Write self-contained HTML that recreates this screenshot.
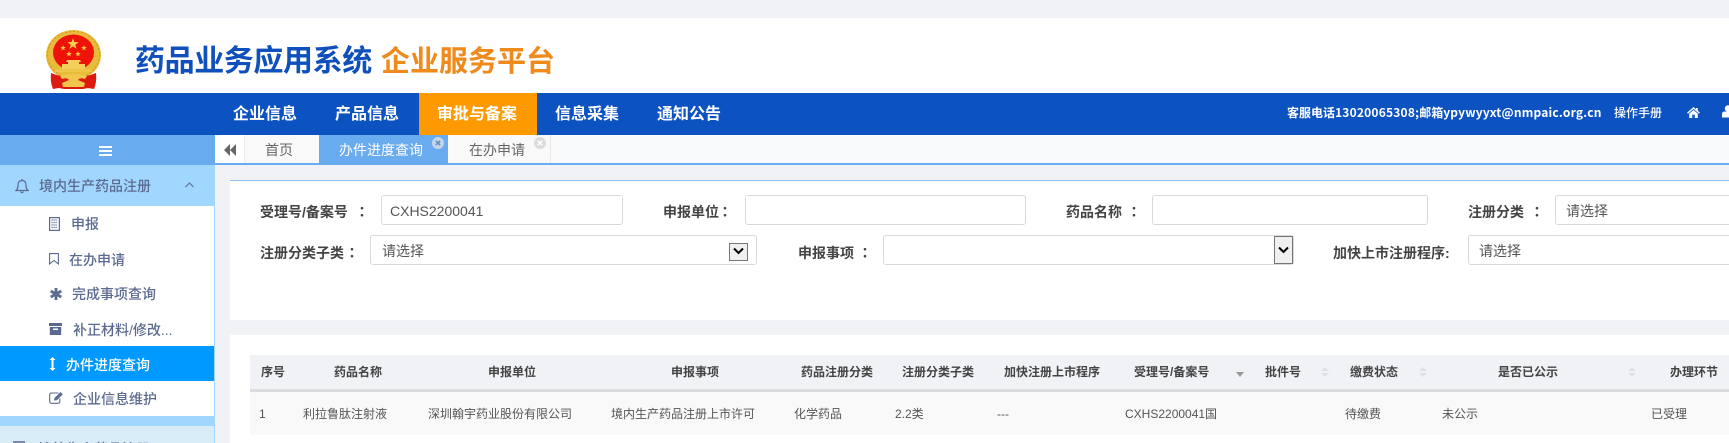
<!DOCTYPE html>
<html lang="zh-CN">
<head>
<meta charset="utf-8">
<title>药品业务应用系统 企业服务平台</title>
<style>
html,body{margin:0;padding:0;width:1729px;height:443px;overflow:hidden;background:#f0f2f6;font-family:"Liberation Sans","Noto Sans CJK SC",sans-serif;}
#root{position:relative;width:1729px;height:443px;overflow:hidden;contain:paint;}
.b{position:absolute;}
.t{position:absolute;white-space:nowrap;line-height:20px;height:20px;}
.nav{color:#fff;font-size:16px;font-weight:700;line-height:24px;height:24px;top:103px;}
.tab{font-size:14px;color:#666;top:140px;}
.side{font-size:14px;color:#5b6a90;font-weight:500;}
.lab{font-size:14px;color:#444;font-weight:700;}
.col{font-size:14px;color:#444;font-weight:700;font-family:"Noto Sans CJK TC",sans-serif;}
.inp{position:absolute;background:#fff;border:1px solid #d9d9d9;border-radius:3px;box-sizing:border-box;height:30px;}
.val{font-size:14px;color:#555;}
.th{font-size:12px;font-weight:700;color:#444;top:362px;}
.td{font-size:12px;color:#555;top:404px;}
svg{position:absolute;display:block;}
</style>
</head>
<body>
<div id="root">
<div class="b" style="left:0;top:0;width:1729px;height:18px;background:#f0f2f6"></div>
<div class="b" style="left:0;top:18px;width:1729px;height:75px;background:#fff"></div>

<!-- emblem -->
<svg style="left:45px;top:30px" width="57" height="60" viewBox="0 0 57 60">
<defs><path id="st" d="M0,-1 L.224,-.309 L.951,-.309 L.363,.118 L.588,.809 L0,.382 L-.588,.809 L-.363,.118 L-.951,-.309 L-.224,-.309Z" fill="#f7d64e"/></defs>
<ellipse cx="28.500" cy="25" rx="27.500" ry="25" fill="#e9bb3a"/>
<ellipse cx="28.500" cy="25" rx="26" ry="23.500" fill="none" stroke="#cf9420" stroke-width="1" stroke-dasharray="2 2"/>
<ellipse cx="28.500" cy="22.500" rx="20.500" ry="18" fill="#ee1208"/>
<use href="#st" transform="translate(28,14) scale(6)"/>
<use href="#st" transform="translate(18,18) scale(3)"/>
<use href="#st" transform="translate(39,18) scale(3)"/>
<use href="#st" transform="translate(24,24) scale(3)"/>
<use href="#st" transform="translate(33,24) scale(3)"/>
<path d="M22 30 H35 L36 32 H34 V34 H40 V39 H17 V34 H23 V32 H21Z" fill="#f5cf5c"/>
<rect x="10" y="39" width="37" height="3" fill="#efc54a"/>
<path d="M6 43 Q5 52 8 59 L14 58 L19 59 H38 L43 58 L49 59 Q52 52 51 43 Q42 47 28.500 47 Q15 47 6 43Z" fill="#dd1a10"/>
<path d="M15 46 Q28.500 42 42 46 L40 49 Q35 47 33 50 L40 53 L39 57 H18 L17 53 L24 50 Q22 47 17 49Z" fill="#f0c64c"/>
</svg>

<div class="t" id="title1" style="left:135px;top:42px;height:40px;line-height:40px;font-size:30px;font-weight:700;color:#0f50bd;letter-spacing:-.4px">药品业务应用系统</div>
<div class="t" id="title2" style="left:381px;top:42px;height:40px;line-height:40px;font-size:29px;font-weight:700;color:#ef8a1c">企业服务平台</div>

<!-- nav -->
<div class="b" style="left:0;top:93px;width:1729px;height:42px;background:#0c52c1"></div>
<div class="b" style="left:419px;top:93px;width:118px;height:42px;background:#ff9900"></div>
<div class="t nav" style="left:233px">企业信息</div>
<div class="t nav" style="left:335px">产品信息</div>
<div class="t nav" style="left:437px">审批与备案</div>
<div class="t nav" style="left:555px">信息采集</div>
<div class="t nav" style="left:657px">通知公告</div>
<div class="t" id="contact" style="left:1287px;top:103px;font-size:12px;font-weight:700;color:#fff;font-family:'Noto Sans CJK SC',sans-serif">客服电话<span style="letter-spacing:.2px">13020065308;</span>邮箱<span style="letter-spacing:.2px">ypywyyxt@nmpaic.org.cn</span></div>
<div class="t" style="left:1614px;top:103px;font-size:12px;color:#fff;font-weight:500">操作手册</div>
<svg style="left:1687px;top:107px" width="13" height="11" viewBox="0 0 13 11"><path d="M6.500 0 L9 2.200 V1 H10.800 V3.800 L13 5.800 L12 6.600 L6.500 1.900 L1 6.600 L0 5.800Z M2.200 6.600 L6.500 3 L10.800 6.600 V11 H7.800 V7.800 H5.200 V11 H2.200Z" fill="#fff"/></svg>
<svg style="left:1722px;top:105px" width="7" height="13" viewBox="0 0 7 13"><circle cx="6" cy="3.500" r="3.200" fill="#fff"/><path d="M0 12.500 V9 Q0 6.500 3 6.500 H7 V12.500Z" fill="#fff"/></svg>

<!-- sidebar -->
<div class="b" style="left:0;top:135px;width:215px;height:30px;background:#69abef"></div>
<div class="b" style="left:99px;top:146px;width:13px;height:2px;background:#fff"></div>
<div class="b" style="left:99px;top:150px;width:13px;height:2px;background:#fff"></div>
<div class="b" style="left:99px;top:154px;width:13px;height:2px;background:#fff"></div>
<div class="b" style="left:0;top:165px;width:215px;height:278px;background:#a1d6ff"></div>
<div class="b" style="left:0;top:206px;width:214px;height:210px;background:#fff"></div>
<div class="b" style="left:0;top:346px;width:214px;height:35px;background:#0099ff"></div>
<div class="b" style="left:0;top:426px;width:214px;height:17px;background:#d8ecf7"></div>

<svg style="left:15px;top:178px" width="14" height="16" viewBox="0 0 14 16"><path d="M1 12.500 C3 11 3 9 3 7 C3 4 4.500 2.500 7 2.500 C9.500 2.500 11 4 11 7 C11 9 11 11 13 12.500Z M5.500 13.500 Q7 16 8.500 13.500 M7 1 V2.500" fill="none" stroke="#5b6a90" stroke-width="1.200"/></svg>
<div class="t side" style="left:39px;top:176px">境内生产药品注册</div>
<svg style="left:185px;top:182px" width="9" height="6" viewBox="0 0 9 6"><path d="M.5 5 L4.500 1 L8.500 5" fill="none" stroke="#5b6a90" stroke-width="1.100"/></svg>

<svg style="left:49px;top:217px" width="11" height="14" viewBox="0 0 11 14"><rect x=".6" y=".6" width="9.800" height="12.800" fill="none" stroke="#5b6a90" stroke-width="1.200"/><path d="M2.500 3H8.500M2.500 5.500H8.500M2.500 8H8.500M2.500 10.500H8.500" stroke="#5b6a90" stroke-width="1.200" stroke-dasharray="1.200 .8"/></svg>
<div class="t side" style="left:71px;top:214px">申报</div>
<svg style="left:49px;top:253px" width="10" height="12" viewBox="0 0 10 12"><path d="M.6 .6 H9.400 V11 L5 7.500 L.6 11Z" fill="none" stroke="#5b6a90" stroke-width="1.100"/></svg>
<div class="t side" style="left:69px;top:250px">在办申请</div>
<svg style="left:50px;top:288px" width="12" height="12" viewBox="0 0 12 12"><path d="M4.600 0 H7.400 V3.600 L10.600 1.800 L12 4.200 L8.800 6 L12 7.800 L10.600 10.200 L7.400 8.400 V12 H4.600 V8.400 L1.400 10.200 L0 7.800 L3.200 6 L0 4.200 L1.400 1.800 L4.600 3.600Z" fill="#5b6a90"/></svg>
<div class="t side" style="left:72px;top:284px">完成事项查询</div>
<svg style="left:49px;top:323px" width="13" height="12" viewBox="0 0 13 12"><rect width="13" height="3" fill="#5b6a90"/><path d="M.8 4 H12.200 V12 H.8Z M4 5.500 V7 H9 V5.500Z" fill="#5b6a90" fill-rule="evenodd"/></svg>
<div class="t side" style="left:73px;top:320px">补正材料/修改...</div>
<svg style="left:49px;top:357px" width="7" height="14" viewBox="0 0 7 14"><path d="M3.500 0 L6.500 3 H4.500 V11 H6.500 L3.500 14 L.5 11 H2.500 V3 H.5Z" fill="#fff"/></svg>
<div class="t side" style="left:66px;top:355px;color:#fff">办件进度查询</div>
<svg style="left:49px;top:392px" width="14" height="12" viewBox="0 0 14 12"><path d="M9.500 1 H2.500 Q.7 1 .7 2.800 V9.300 Q.7 11.300 2.500 11.300 H9 Q10.800 11.300 10.800 9.300 V6.500" fill="none" stroke="#5b6a90" stroke-width="1.100"/><path d="M5 8.500 L5.500 6 L11.500 0 L13.800 2.300 L7.800 8.300Z" fill="#5b6a90"/></svg>
<div class="t side" style="left:73px;top:389px">企业信息维护</div>
<div class="b" style="left:13px;top:441px;width:12px;height:2px;background:#7c89a8"></div>
<div class="t side" style="left:38px;top:439px">境外生产药品注册</div>

<!-- tab bar -->
<div class="b" style="left:215px;top:135px;width:1514px;height:28px;background:#f9fafb"></div>
<div class="b" style="left:215px;top:163px;width:1514px;height:2px;background:#69abef"></div>
<div class="b" style="left:215px;top:135px;width:29px;height:28px;background:#fff"></div>
<svg style="left:224px;top:144px" width="12" height="12" viewBox="0 0 12 12"><path d="M6 0 V12 L0 6Z M12 0 V12 L6 6Z" fill="#666"/></svg>
<div class="b" style="left:244px;top:135px;width:75px;height:28px;background:#f9f9f9;border-left:1px solid #eee;box-sizing:border-box"></div>
<div class="b" style="left:319px;top:135px;width:129px;height:30px;background:#69abef"></div>
<div class="b" style="left:448px;top:135px;width:103px;height:28px;background:#f9f9f9;border-right:1px solid #e8e8e8;box-sizing:border-box"></div>
<div class="t tab" style="left:265px">首页</div>
<div class="t tab" style="left:339px;color:#fff">办件进度查询</div>
<div class="t tab" style="left:469px">在办申请</div>
<svg style="left:432px;top:137px" width="12" height="12" viewBox="0 0 12 12"><circle cx="6" cy="6" r="6" fill="#c6d6e8"/><path d="M3.800 3.800 L8.200 8.200 M8.200 3.800 L3.800 8.200" stroke="#5f8fc6" stroke-width="1.500"/></svg>
<svg style="left:534px;top:137px" width="12" height="12" viewBox="0 0 12 12"><circle cx="6" cy="6" r="6" fill="#dcdcdc"/><path d="M3.800 3.800 L8.200 8.200 M8.200 3.800 L3.800 8.200" stroke="#fff" stroke-width="1.500"/></svg>

<!-- form panel -->
<div class="b" style="left:230px;top:180px;width:1499px;height:140px;background:#fff;border-top:1px solid #8dc0f4;box-sizing:border-box"></div>

<div class="t lab" style="left:260px;top:202px">受理号/备案号</div><div class="t col" style="left:355px;top:202px">：</div>
<div class="inp" style="left:381px;top:195px;width:242px"></div>
<div class="t val" style="left:390px;top:201px">CXHS2200041</div>
<div class="t lab" style="left:663px;top:202px">申报单位</div><div class="t col" style="left:718px;top:202px">：</div>
<div class="inp" style="left:745px;top:195px;width:281px"></div>
<div class="t lab" style="left:1066px;top:202px">药品名称</div><div class="t col" style="left:1127px;top:202px">：</div>
<div class="inp" style="left:1152px;top:195px;width:276px"></div>
<div class="t lab" style="left:1468px;top:202px">注册分类</div><div class="t col" style="left:1530px;top:202px">：</div>
<div class="inp" style="left:1555px;top:195px;width:200px"></div>
<div class="t val" style="left:1566px;top:201px">请选择</div>

<div class="t lab" style="left:260px;top:243px">注册分类子类</div><div class="t col" style="left:345px;top:243px">：</div>
<div class="inp" style="left:370px;top:235px;width:387px"></div>
<div class="t val" style="left:382px;top:241px">请选择</div>
<div class="b" style="left:729px;top:243px;width:19px;height:18px;background:#f0f0f0;border:1px solid #767676;box-sizing:border-box"></div>
<svg style="left:733px;top:247px" width="11" height="8" viewBox="0 0 11 8"><path d="M1 1.500 L5.500 6 L10 1.500" fill="none" stroke="#000" stroke-width="2"/></svg>
<div class="t lab" style="left:798px;top:243px">申报事项</div><div class="t col" style="left:858px;top:243px">：</div>
<div class="inp" style="left:883px;top:235px;width:411px"></div>
<div class="b" style="left:1274px;top:236px;width:19px;height:28px;background:#f0f0f0;border:1px solid #767676;box-sizing:border-box"></div>
<svg style="left:1278px;top:246px" width="11" height="8" viewBox="0 0 11 8"><path d="M1 1.500 L5.500 6 L10 1.500" fill="none" stroke="#000" stroke-width="2"/></svg>
<div class="t lab" style="left:1333px;top:243px">加快上市注册程序:</div>
<div class="inp" style="left:1468px;top:235px;width:300px"></div>
<div class="t val" style="left:1479px;top:241px">请选择</div>

<!-- table panel -->
<div class="b" style="left:230px;top:335px;width:1499px;height:108px;background:#fff"></div>
<div class="b" style="left:250px;top:355px;width:1479px;height:34px;background:#f0f2f6"></div>
<div class="b" style="left:250px;top:389px;width:1479px;height:3px;background:#dcdcde"></div>
<div class="b" style="left:250px;top:392px;width:1479px;height:43px;background:#f9f9f9"></div>

<div class="t th" style="left:261px">序号</div>
<div class="t th" style="left:334px">药品名称</div>
<div class="t th" style="left:488px">申报单位</div>
<div class="t th" style="left:671px">申报事项</div>
<div class="t th" style="left:801px">药品注册分类</div>
<div class="t th" style="left:902px">注册分类子类</div>
<div class="t th" style="left:1004px">加快注册上市程序</div>
<div class="t th" style="left:1134px">受理号/备案号</div>
<svg style="left:1236px;top:372px" width="8" height="5" viewBox="0 0 8 5"><path d="M0 0 H8 L4 5Z" fill="#999"/></svg>
<div class="t th" style="left:1265px">批件号</div>
<svg style="left:1321px;top:367px" width="8" height="10" viewBox="0 0 8 10"><path d="M4 0 L8 4 H0Z M0 6 H8 L4 10Z" fill="#dfe0e3"/></svg>
<div class="t th" style="left:1350px">缴费状态</div>
<svg style="left:1419px;top:367px" width="8" height="10" viewBox="0 0 8 10"><path d="M4 0 L8 4 H0Z M0 6 H8 L4 10Z" fill="#dfe0e3"/></svg>
<div class="t th" style="left:1498px">是否已公示</div>
<svg style="left:1628px;top:367px" width="8" height="10" viewBox="0 0 8 10"><path d="M4 0 L8 4 H0Z M0 6 H8 L4 10Z" fill="#dfe0e3"/></svg>
<div class="t th" style="left:1670px">办理环节</div>

<div class="t td" style="left:259px">1</div>
<div class="t td" style="left:303px">利拉鲁肽注射液</div>
<div class="t td" style="left:428px">深圳翰宇药业股份有限公司</div>
<div class="t td" style="left:611px">境内生产药品注册上市许可</div>
<div class="t td" style="left:794px">化学药品</div>
<div class="t td" style="left:895px">2.2类</div>
<div class="t td" style="left:997px">---</div>
<div class="t td" style="left:1125px">CXHS2200041国</div>
<div class="t td" style="left:1345px">待缴费</div>
<div class="t td" style="left:1442px">未公示</div>
<div class="t td" style="left:1651px">已受理</div>
</div>
</body>
</html>
